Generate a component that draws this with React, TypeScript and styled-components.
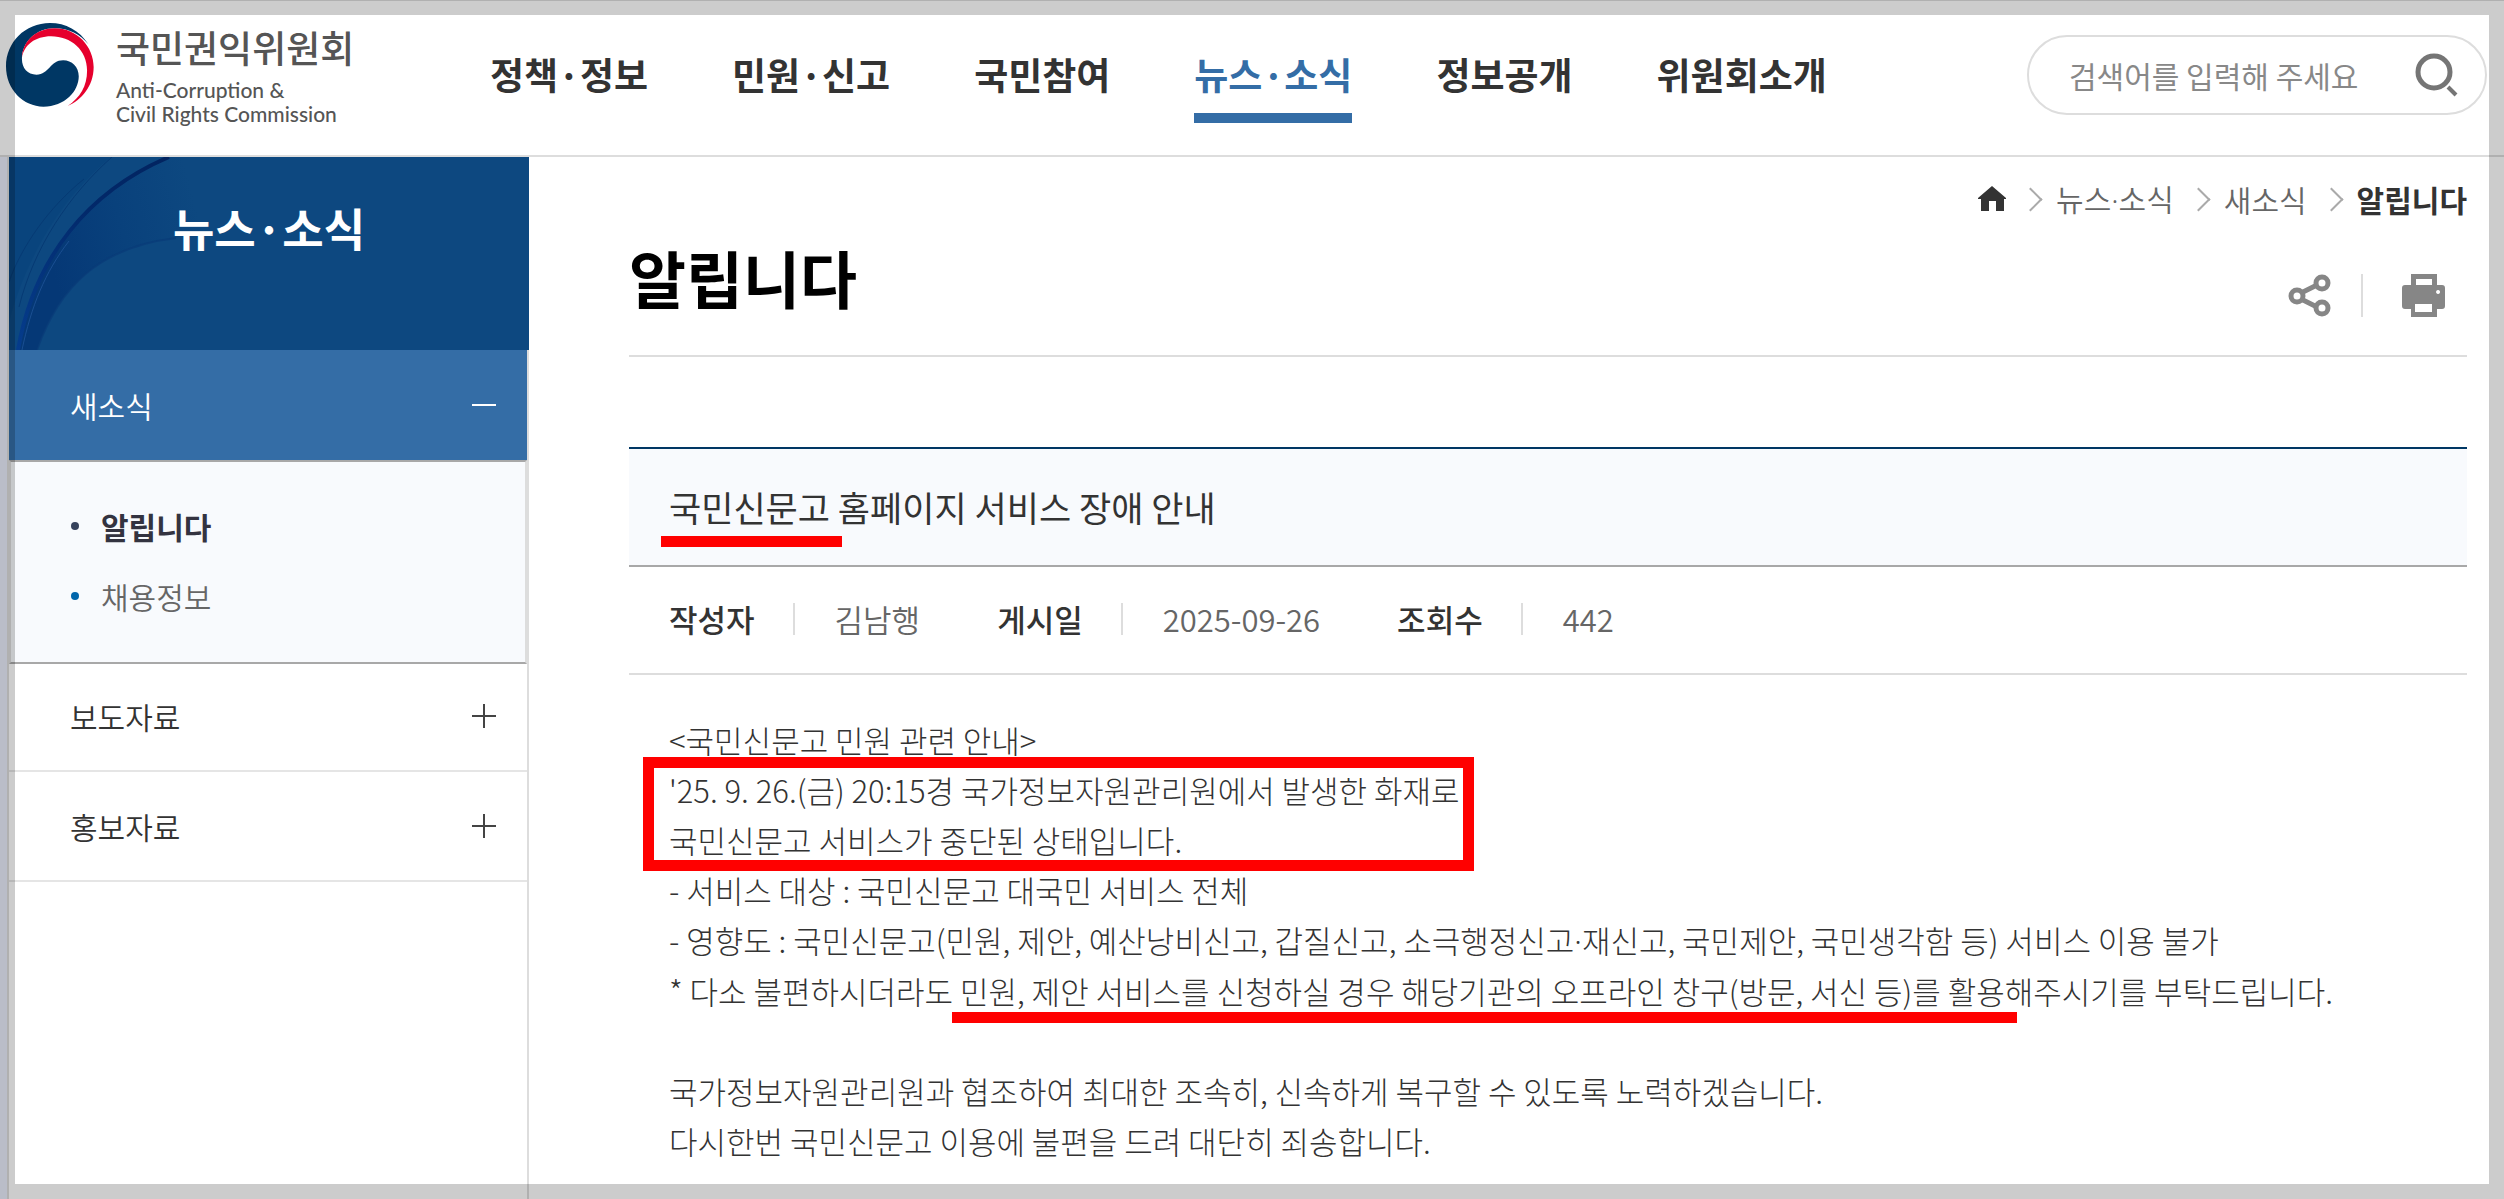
import React from "react";
import styled, { createGlobalStyle, css } from "styled-components";

const color = {
  line: "#dddddd",
  strongLine: "#a8a8a8",
  navy: "#0d4880",
  deep: "#003764",
  blue: "#346da6",
  text: "#333333",
  sub: "#666666",
  mark: "#ff0000",
  panel: "#f8fafd",
};

const Global = createGlobalStyle`
  *, *::before, *::after { box-sizing: border-box; }
  body {
    margin: 0;
    background: #fff;
    color: ${color.text};
    font-family: "Noto Sans CJK KR", "Noto Sans", sans-serif;
    font-size: 30px;
    line-height: 50px;
  }
  a { color: inherit; text-decoration: none; }
  ul, ol, dl, dd, h1, h2, p { margin: 0; padding: 0; }
  ul, ol { list-style: none; }
  button { border: 0; padding: 0; background: none; font: inherit; color: inherit; cursor: pointer; }
  svg { display: block; flex: none; }
`;

const Page = styled.div`
  min-height: 100vh;
  display: flex;
  flex-direction: column;
  border-top: 1px solid ${color.line};
`;

const Shade = styled.div`
  position: fixed;
  inset: 0;
  border: 15px solid rgba(0, 0, 0, 0.2);
  pointer-events: none;
  z-index: 10;
`;

const Header = styled.header`
  display: flex;
  align-items: flex-start;
  height: 156px;
  padding: 0 17px 0 6px;
  border-bottom: 2px solid ${color.line};
`;

const Logo = styled.a`
  display: flex;
  gap: 22px;
  width: 484px;
  padding-top: 22px;
  color: #555;
`;

const LogoText = styled.span`
  display: flex;
  flex-direction: column;
  font-family: Lato, "Noto Sans", sans-serif;
  font-size: 21px;
  font-weight: 500;
  line-height: 24px;
`;

const LogoName = styled.strong`
  margin-bottom: 7px;
  font-family: "Noto Sans CJK KR", sans-serif;
  font-size: 37px;
  font-weight: 500;
  line-height: 48px;
`;

const Nav = styled.nav`
  flex: 1;
  ul { display: flex; gap: 84px; }
`;

const NavLink = styled.a<{ $active?: boolean }>`
  display: block;
  height: 122px;
  padding-top: 46px;
  font-size: 37px;
  font-weight: 700;
  line-height: 54px;
  white-space: nowrap;
  ${(p) => p.$active && css`
    color: ${color.blue};
    border-bottom: 10px solid ${color.blue};
  `}
`;

const Search = styled.form`
  display: flex;
  align-items: center;
  justify-content: space-between;
  width: 460px;
  height: 80px;
  margin-top: 34px;
  padding: 0 26px 0 40px;
  border: 2px solid ${color.line};
  border-radius: 40px;
  input {
    flex: 1;
    min-width: 0;
    padding: 0;
    border: 0;
    outline: 0;
    background: none;
    font: inherit;
    font-weight: 400;
    &::placeholder { color: #888; opacity: 1; }
  }
`;

const Body = styled.div`
  flex: 1;
  display: flex;
`;

const Gutter = styled.div`
  width: 9px;
  background: #e9edfa;
  border-right: 2px solid ${color.line};
`;

const Side = styled.aside`
  width: 520px;
  border-right: 2px solid ${color.line};
`;

const SideTitle = styled.h2`
  position: relative;
  height: 193px;
  margin-right: -2px;
  padding-top: 39px;
  background: ${color.navy};
  color: #fff;
  font-size: 45px;
  font-weight: 700;
  line-height: 64px;
  text-align: center;
  svg { position: absolute; left: 0; top: 0; }
  span { position: relative; }
`;

const SideButton = styled.button<{ $open?: boolean }>`
  display: flex;
  align-items: center;
  justify-content: space-between;
  width: 100%;
  height: 110px;
  padding: 0 31px 1px 61px;
  font-weight: 350;
  border-bottom: 2px solid #e5e5e5;
  ${(p) => p.$open && css`
    padding-bottom: 0;
    border-bottom: 0;
    background: ${color.blue};
    color: #fff;
  `}
`;

const SubMenu = styled.ul`
  position: relative;
  height: 204px;
  margin-bottom: -2px;
  padding: 29px 0 0 60px;
  background: ${color.panel};
  border: 2px solid ${color.line};
  border-top-color: ${color.strongLine};
  border-bottom-color: ${color.strongLine};
`;

const SubItem = styled.li<{ $current?: boolean }>`
  display: flex;
  align-items: center;
  gap: 22px;
  height: 70px;
  color: ${(p) => (p.$current ? "#333340" : color.sub)};
  font-weight: ${(p) => (p.$current ? 700 : 350)};
  &::before {
    content: "";
    width: 8px;
    height: 8px;
    border-radius: 50%;
    background: ${(p) => (p.$current ? "#36425c" : "#0065ab")};
  }
`;

const Main = styled.main`
  flex: 1;
  min-width: 0;
  padding: 17px 37px 0 100px;
`;

const Crumbs = styled.ol`
  display: flex;
  align-items: center;
  justify-content: flex-end;
  height: 50px;
  color: ${color.sub};
  font-weight: 350;
  li { display: flex; align-items: center; }
  li + li::before {
    content: "";
    width: 17px;
    height: 17px;
    margin: 0 17px 0 16px;
    border: solid #aaa;
    border-width: 2px 2px 0 0;
    transform: rotate(45deg);
  }
  [aria-current] { color: ${color.text}; font-weight: 700; }
`;

/* Narrow middle dot between Korean words */
const Dot = styled.span`
  font-family: "Noto Sans", sans-serif;
`;

const TitleRow = styled.div`
  display: flex;
  justify-content: space-between;
  height: 133px;
  padding-top: 8px;
  border-bottom: 2px solid ${color.line};
  h1 {
    color: #000;
    font-size: 62px;
    font-weight: 700;
    line-height: 90px;
  }
`;

const Tools = styled.div`
  display: flex;
  align-items: center;
  height: 43px;
  margin: 42px 22px 0 0;
  button:first-child { padding-right: 30px; }
  button + button {
    padding-left: 39px;
    border-left: 2px solid ${color.line};
  }
`;

const Article = styled.article`
  margin-top: 90px;
  border-top: 2px solid ${color.deep};
`;

const Subject = styled.h2`
  height: 118px;
  padding: 31px 40px 0;
  background: ${color.panel};
  border-bottom: 2px solid ${color.strongLine};
  font-size: 35px;
  font-weight: 400;
  line-height: 54px;
`;

const Meta = styled.dl`
  display: flex;
  align-items: center;
  gap: 77px;
  height: 108px;
  padding: 0 40px 2px;
  border-bottom: 2px solid ${color.line};
  font-size: 31px;
  div { display: flex; align-items: center; }
  dt { font-weight: 500; }
  dd { display: flex; align-items: center; color: ${color.sub}; font-weight: 350; }
  dd::before {
    content: "";
    width: 2px;
    height: 32px;
    margin: 0 40px 0 38px;
    background: ${color.line};
  }
`;

const Content = styled.div`
  padding: 40px 40px 0;
  font-size: 31px;
  font-weight: 300;
  p { min-height: 50px; }
`;

/* Red pen line under a phrase */
const Underlined = styled.mark<{ $drop: number }>`
  position: relative;
  background: none;
  color: inherit;
  &::after {
    content: "";
    position: absolute;
    left: -8px;
    right: -12px;
    bottom: ${(p) => -p.$drop}px;
    height: 11px;
    background: ${color.mark};
  }
`;

/* Red frame round the key lines */
const Boxed = styled.div`
  position: relative;
  width: fit-content;
  &::after {
    content: "";
    position: absolute;
    inset: -8px -14px -6px -26px;
    border: 11px solid ${color.mark};
  }
`;

const Emblem = () => (
  <svg width="88" height="84" viewBox="0 0 254 252" preserveAspectRatio="none" aria-hidden="true">
    <path fill="#003764" d="M238 64C212 22 172 0 127 0 55 0 0 58 0 130c0 70 50 121 108 121 62 0 102-46 102-91 0-28-20-48-45-48-38 0-40 43-77 43-26 0-42-20-42-47 0-52 42-92 94-92 42 0 74 18 98 48Z" />
    <path fill="#e6002d" d="M46 104C48 52 90 16 140 16c66 0 113 56 113 116 0 58-36 100-75 117 36-26 56-60 56-106 0-62-46-103-104-103-46 0-78 26-84 64Z" />
  </svg>
);

const Swoosh = () => (
  <svg width="260" height="193" viewBox="0 0 260 193" aria-hidden="true">
    <defs>
      <linearGradient id="fold" gradientUnits="userSpaceOnUse" x1="40" y1="100" x2="190" y2="60">
        <stop offset="0" stopColor="#053876" />
        <stop offset="0.5" stopColor="#09417c" />
        <stop offset="1" stopColor="#0d4880" />
      </linearGradient>
      <linearGradient id="edge" x1="0" y1="1" x2="1" y2="0">
        <stop offset="0" stopColor="#053c8c" />
        <stop offset="0.6" stopColor="#02296a" />
        <stop offset="1" stopColor="#022460" />
      </linearGradient>
    </defs>
    <path fill="#06437c" opacity="0.6" d="M0 0H102C60 35 20 90 0 165Z" />
    <path fill="url(#fold)" d="M160 0C80 34 25 100 8 193H28C50 130 90 90 167 81L260 60V0Z" />
    <g fill="none">
      <path stroke="url(#edge)" strokeWidth="4" d="M160 0C80 34 25 100 9 193" />
      <path stroke="#1a4f92" strokeWidth="1" d="M60 84C36 115 22 150 13 193" />
      <path stroke="#063a74" strokeWidth="1" d="M103 0C60 38 25 90 10 150M75 22C40 50 12 90 0 125" />
      <path stroke="#083a78" strokeWidth="2" opacity="0.7" d="M28 193C50 130 90 90 167 81" />
    </g>
  </svg>
);

const SearchIcon = () => (
  <svg width="46" height="46" viewBox="0 0 46 46" fill="none" stroke="#757575" strokeWidth="5" aria-hidden="true">
    <circle cx="21" cy="20" r="16" />
    <path d="M35 35l8 8" strokeWidth="4" />
  </svg>
);

const HomeIcon = () => (
  <svg width="28" height="26" viewBox="0 0 28 26" fill={color.text} aria-hidden="true">
    <path d="M14 0l14 12v1h-2v12h-8V15h-7v10H3V13H0v-1Z" />
  </svg>
);

const ShareIcon = () => (
  <svg width="43" height="43" viewBox="0 0 43 43" fill="none" stroke="#868686" strokeWidth="5" aria-hidden="true">
    <path d="M13 19l16-8M13 25l16 8" />
    <circle cx="9" cy="22" r="6" />
    <circle cx="34" cy="9" r="6" />
    <circle cx="34" cy="34" r="6" />
  </svg>
);

const PrintIcon = () => (
  <svg width="43" height="43" viewBox="0 0 43 43" fill="#868686" fillRule="evenodd" aria-hidden="true">
    <path d="M9 0h26v11h5a3 3 0 0 1 3 3v18a3 3 0 0 1-3 3h-5v8H9v-8H3a3 3 0 0 1-3-3V14a3 3 0 0 1 3-3h6ZM14 5v6h16V5ZM13 30v8h17v-8ZM36 16a2 2 0 1 0 .1 0Z" />
  </svg>
);

const Toggle = ({ open = false }: { open?: boolean }) => (
  <svg width="24" height="24" viewBox="0 0 24 24" fill="none" stroke={open ? "#fff" : "#444"} strokeWidth="2" aria-hidden="true">
    <path d={open ? "M0 12h24" : "M0 12h24M12 0v24"} />
  </svg>
);

const menus = ["정책·정보", "민원·신고", "국민참여", "뉴스·소식", "정보공개", "위원회소개"];
const meta = [
  ["작성자", "김남행"],
  ["게시일", "2025-09-26"],
  ["조회수", "442"],
];

export default function App() {
  return (
    <Page>
      <Global />
      <Shade />
      <Header>
        <Logo href="#">
          <Emblem />
          <LogoText>
            <LogoName>국민권익위원회</LogoName>
            <span>Anti-Corruption &amp;</span>
            <span>Civil Rights Commission</span>
          </LogoText>
        </Logo>
        <Nav>
          <ul>
            {menus.map((m) => (
              <li key={m}>
                <NavLink href="#" $active={m === "뉴스·소식"}>{m}</NavLink>
              </li>
            ))}
          </ul>
        </Nav>
        <Search role="search" onSubmit={(e) => e.preventDefault()}>
          <input type="text" aria-label="검색어" placeholder="검색어를 입력해 주세요" />
          <button type="submit" aria-label="검색"><SearchIcon /></button>
        </Search>
      </Header>
      <Body>
        <Gutter />
        <Side>
          <SideTitle><Swoosh /><span>뉴스·소식</span></SideTitle>
          <ul>
            <li>
              <SideButton type="button" $open aria-expanded="true">새소식<Toggle open /></SideButton>
              <SubMenu>
                <SubItem $current><a href="#">알립니다</a></SubItem>
                <SubItem><a href="#">채용정보</a></SubItem>
              </SubMenu>
            </li>
            <li><SideButton type="button" aria-expanded="false">보도자료<Toggle /></SideButton></li>
            <li><SideButton type="button" aria-expanded="false">홍보자료<Toggle /></SideButton></li>
          </ul>
        </Side>
        <Main>
          <Crumbs>
            <li><a href="#" aria-label="홈"><HomeIcon /></a></li>
            <li><a href="#">뉴스<Dot>·</Dot>소식</a></li>
            <li><a href="#">새소식</a></li>
            <li><a href="#" aria-current="page">알립니다</a></li>
          </Crumbs>
          <TitleRow>
            <h1>알립니다</h1>
            <Tools>
              <button type="button" aria-label="공유"><ShareIcon /></button>
              <button type="button" aria-label="인쇄"><PrintIcon /></button>
            </Tools>
          </TitleRow>
          <Article>
            <Subject><Underlined $drop={15}>국민신문고</Underlined> 홈페이지 서비스 장애 안내</Subject>
            <Meta>
              {meta.map(([k, v]) => (
                <div key={k}><dt>{k}</dt><dd>{v}</dd></div>
              ))}
            </Meta>
            <Content>
              <p>&lt;국민신문고 민원 관련 안내&gt;</p>
              <Boxed>
                <p>'25. 9. 26.(금) 20:15경 국가정보자원관리원에서 발생한 화재로</p>
                <p>국민신문고 서비스가 중단된 상태입니다.</p>
              </Boxed>
              <p>- 서비스 대상 : 국민신문고 대국민 서비스 전체</p>
              <p>- 영향도 : 국민신문고(민원, 제안, 예산낭비신고, 갑질신고, 소극행정신고<Dot>·</Dot>재신고, 국민제안, 국민생각함 등) 서비스 이용 불가</p>
              <p>* 다소 불편하시더라도 <Underlined $drop={10}>민원, 제안 서비스를 신청하실 경우 해당기관의 오프라인 창구(방문, 서신 등)를 활용</Underlined>해주시기를 부탁드립니다.</p>
              <p />
              <p>국가정보자원관리원과 협조하여 최대한 조속히, 신속하게 복구할 수 있도록 노력하겠습니다.</p>
              <p>다시한번 국민신문고 이용에 불편을 드려 대단히 죄송합니다.</p>
            </Content>
          </Article>
        </Main>
      </Body>
    </Page>
  );
}
